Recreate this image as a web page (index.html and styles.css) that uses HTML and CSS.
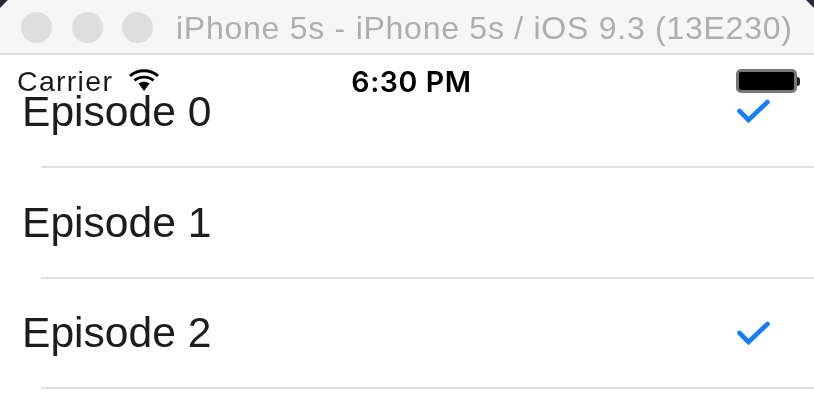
FILE: index.html
```html
<!DOCTYPE html>
<html lang="en">
<head>
<meta charset="utf-8">
<title>iPhone 5s</title>
<link rel="stylesheet" href="styles.css">
</head>
<body>
<div class="window">
  <span class="corner corner-left"></span>
  <span class="corner corner-right"></span>
  <header class="titlebar">
    <div class="lights"><span class="light"></span><span class="light"></span><span class="light"></span></div>
    <div class="title">iPhone 5s - iPhone 5s / iOS 9.3 (13E230)</div>
  </header>
  <main class="screen">
    <div class="statusbar">
      <div class="status-left">
        <span class="carrier">Carrier</span>
        <svg class="wifi" width="30" height="24" viewBox="0 0 30 24" aria-hidden="true">
          <path d="M1 8C8.500 1 21.500 1 29 8" fill="none" stroke="#000" stroke-width="2.800"/>
          <path d="M5.500 12.500C10.500 8 19.500 8 24.500 12.500" fill="none" stroke="#000" stroke-width="2.800"/>
          <path d="M9.500 15.500C12.500 13 17.500 13 20.500 15.500L15 23Z" fill="#000"/>
        </svg>
      </div>
      <div class="status-time">6:30 PM</div>
      <div class="battery"><span class="battery-fill"></span><span class="battery-cap"></span></div>
    </div>
    <ul class="list">
      <li class="row row-first">
        <span class="row-label">Episode 0</span>
        <svg class="check" width="36" height="28" viewBox="0 0 36 28" aria-hidden="true"><path d="M2.500 14L11.500 23L30.500 5" fill="none" stroke="#147efb" stroke-width="4.600" stroke-linecap="round"/></svg>
      </li>
      <li class="row">
        <span class="row-label">Episode 1</span>
      </li>
      <li class="row">
        <span class="row-label">Episode 2</span>
        <svg class="check" width="36" height="28" viewBox="0 0 36 28" aria-hidden="true"><path d="M2.500 14L11.500 23L30.500 5" fill="none" stroke="#147efb" stroke-width="4.600" stroke-linecap="round"/></svg>
      </li>
    </ul>
  </main>
</div>
</body>
</html>
```
FILE: styles.css
```css
* { box-sizing: border-box; }
html, body { margin: 0; padding: 0; background: #fff; }
body { font-family: "Liberation Sans", Arial, sans-serif; }
.window { position: relative; width: 814px; height: 402px; overflow: hidden; background: #fff; filter: blur(0.6px); }
.corner { position: absolute; top: -8px; width: 14px; height: 14px; background: #2a2a3a; transform: rotate(45deg); z-index: 2; }
.corner-left { left: -8px; }
.corner-right { right: -8px; }
.titlebar {
  display: flex; align-items: center; height: 55px; padding: 2px 0 0 21px;
  background: #f6f6f6; border-bottom: 2px solid #dcdcdc;
}
.lights { display: flex; gap: 19.5px; margin-right: 23px; }
.light { width: 31px; height: 31px; border-radius: 50%; background: #dedede; }
.title { font-size: 32px; letter-spacing: 0.74px; color: #aeaeae; white-space: nowrap; margin-top: 1px; }
.screen { position: relative; }
.statusbar {
  position: absolute; top: 0; left: 0; right: 0; height: 52px; z-index: 1;
  display: grid; grid-template-columns: 1fr auto 1fr; align-items: center;
  padding: 0 14px 0 17px; color: #000;
}
.status-left { display: flex; align-items: center; gap: 16px; }
.carrier { font-size: 28.5px; letter-spacing: 1.3px; color: #1a1a1a; }
.wifi { display: block; margin-top: -2px; }
.status-time { font-family: Inter, "Liberation Sans", sans-serif; font-weight: 600; font-size: 28.5px; letter-spacing: 0.6px; margin-left: 6px; }
.battery { display: flex; align-items: center; justify-self: end; width: 64px; }
.battery-fill { width: 61px; height: 24px; background: #000; border: 3px solid #777; border-radius: 5px; }
.battery-cap { width: 3px; height: 9px; background: #222; border-radius: 0 3px 3px 0; }
.list { list-style: none; margin: 0; padding: 0; }
.row {
  position: relative; display: flex; align-items: center; justify-content: space-between;
  height: 110.5px; padding: 0 41px 0 22px; font-size: 42.6px; color: #1c1c1c;
}
.row::after { content: ""; position: absolute; left: 41px; right: 0; bottom: -1px; height: 2px; background: #e0e0e0; }
.row-first { height: 112px; }
.check { display: block; }
```
